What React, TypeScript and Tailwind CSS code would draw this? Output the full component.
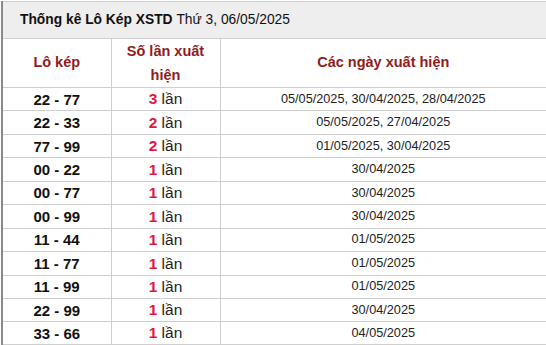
const rows: [string, number, string][] = [
  ["22 - 77", 3, "05/05/2025, 30/04/2025, 28/04/2025"],
  ["22 - 33", 2, "05/05/2025, 27/04/2025"],
  ["77 - 99", 2, "01/05/2025, 30/04/2025"],
  ["00 - 22", 1, "30/04/2025"],
  ["00 - 77", 1, "30/04/2025"],
  ["00 - 99", 1, "30/04/2025"],
  ["11 - 44", 1, "01/05/2025"],
  ["11 - 77", 1, "01/05/2025"],
  ["11 - 99", 1, "01/05/2025"],
  ["22 - 99", 1, "30/04/2025"],
  ["33 - 66", 1, "04/05/2025"],
];

export default function App() {
  return (
    <div className="w-[546px] h-[345px] overflow-hidden bg-white pt-[1px] pl-[1px] font-['Liberation_Sans',Arial,sans-serif]">
      <div className="w-[560px] border-l-2 border-b-2 border-l-[#8a8a8a] border-b-[#8a8a8a]">
        <table className="w-full border-collapse table-fixed">
          <colgroup>
            <col className="w-[108px]" />
            <col className="w-[109px]" />
            <col />
          </colgroup>
          <thead>
            <tr className="h-[37px] bg-[#efeeee]">
              <th
                colSpan={3}
                className="border border-[#cfcfcf] border-l-0 pl-[17px] pt-[1px] text-left text-[13.8px] font-bold text-[#111]"
              >
                Thống kê Lô Kép XSTD <span className="font-normal">Thứ 3, 06/05/2025</span>
              </th>
            </tr>
            <tr className="h-[47px] text-[14.5px] font-bold text-[#921b1b]">
              <th className="border border-[#cfcfcf] border-l-0">Lô kép</th>
              <th className="border border-[#cfcfcf] px-2 leading-[24px]">Số lần xuất hiện</th>
              <th className="border border-[#cfcfcf] pr-[14px]">Các ngày xuất hiện</th>
            </tr>
          </thead>
          <tbody>
            {rows.map(([pair, n, dates], i) => (
              <tr key={pair} className={i === rows.length - 1 ? "h-[22.5px]" : "h-[23.45px]"}>
                <td className="border border-[#cfcfcf] border-l-0 text-center text-[15px] font-bold text-[#111] leading-none">
                  {pair}
                </td>
                <td className="border border-[#cfcfcf] text-center text-[15.5px] text-[#222] leading-none">
                  <span className="font-bold text-[#e3173e]">{n}</span> lần
                </td>
                <td className="border border-[#cfcfcf] pr-[14px] text-center text-[12.7px] text-[#222] leading-none">
                  {dates}
                </td>
              </tr>
            ))}
          </tbody>
        </table>
      </div>
    </div>
  );
}
